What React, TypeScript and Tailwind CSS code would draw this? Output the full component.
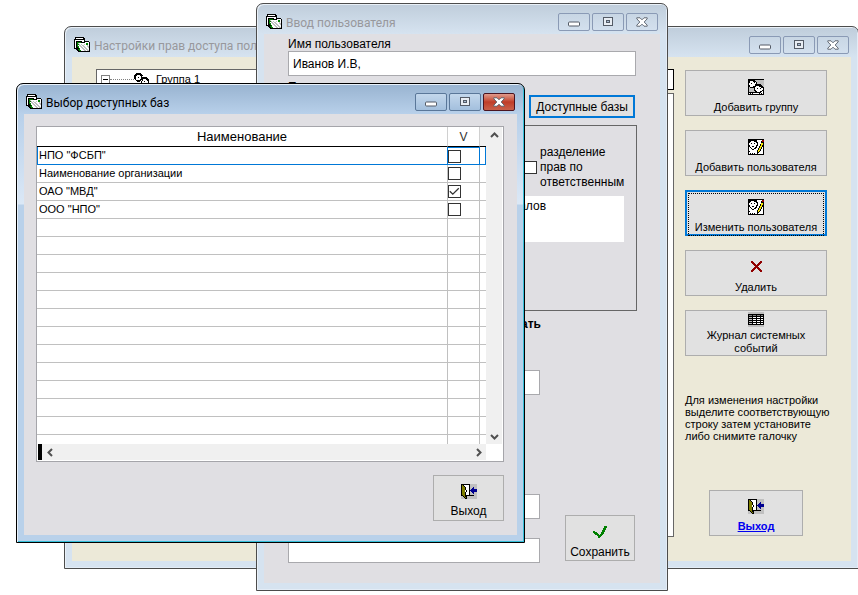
import { FC, ReactNode, useState } from 'react';

/* ---------- Pixel icons ---------- */

const PALETTE: Record<string, string> = {
  k: '#000000',
  w: '#ffffff',
  s: '#c0c0c0',
  d: '#808080',
  g: '#008000',
  o: '#808000',
  n: '#000090',
  y: '#f5e600',
  r: '#900000',
};

interface PixelIconProps {
  rows: string[];
}

// Draws one square per character, '.' stays transparent
const PixelIcon: FC<PixelIconProps> = ({ rows }) => (
  <svg
    width={rows[0].length}
    height={rows.length}
    viewBox={`0 0 ${rows[0].length} ${rows.length}`}
    shapeRendering="crispEdges"
    className="shrink-0"
    aria-hidden="true"
  >
    {rows.flatMap((row, y) =>
      row.split('').map((c, x) =>
        c === '.' ? null : <rect key={`${x}-${y}`} x={x} y={y} width="1" height="1" fill={PALETTE[c]} />
      )
    )}
  </svg>
);

const CARDS = [
  '.kkkkkkkkk......',
  '.kwwwwwwwkk.....',
  'kkkkkkkkkkk.....',
  'kwwwwwwwwwk.....',
  'kwkkkkkkwwkkkkk.',
  'kwkggggkkkkwwwwk',
  'kwkgswwwwwwwggwk',
  'kwkggswswwswggwk',
  'kwkgwsswsswwwswk',
  'kwkggwsswsswwssk',
  'kwkkgwwsswsswwsk',
  'kkkkkgwwsswsswwk',
  '..kkggwwwsswsswk',
  '...kkggwwwsswssk',
  '....kkkkkkkkkkkk',
];

const GROUP = [
  'kkkkkkkkkkkkkkkk',
  'kkkkkkksssssssss',
  'kkwwwkkkssssssss',
  'kkwwwwkwksssssss',
  'kwwkwwwwksssssss',
  'kwwwwwwkkkkkksss',
  'kkwwwwwkkkkkkkss',
  'kkwwwkkkwwwkkkks',
  'kskkkkkwwwwwwkkk',
  'kssssskwwkwwkwwk',
  'kssssskwwwwwwwwk',
  'kssssskkwwwwwwkk',
  'ksssssskkwwwkkwk',
  'kkkkkkkkkkkkkwwk',
  'kwkwkwwwwwwkwkwk',
  'kkkkkkkkkkkkkkkk',
];

const USER_EDIT = [
  'kkkkkkkkkkkkkkkk',
  'kkkkkkkkkwwwwwrr',
  'kkkwwwkkkwwwwkrr',
  'kkwwwwwwkkwwwkkk',
  'kwwkwwkwwkwwwyyk',
  'kwwwwwwwwkwwkyyk',
  'kkwwwwwwkkwwkykk',
  'kkwwkkwwkwwkyykk',
  'kwkwwwwkkwwkykwk',
  'kwwkwwkkwwkyykwk',
  'kwwwkkwwwwkykwwk',
  'kwwwwwwwwkyykwwk',
  'kkwwwwwwwkykwwwk',
  'kwwwwwwwwkkwwwwk',
  'kwkwkwkwwkwwwwwk',
  'kkkkkkkkkkkkkkkk',
];

const HEADS = [
  '..kkkkk.........',
  '.kkkkkkk........',
  'kkkwwwkkk.......',
  'kkwwwwwk........',
  'kkwwkwwkkkkkk...',
  'kkwwwwwkkkkkkk..',
  '.kwwwwkkkwwwkkk.',
  '..kkkkk.kwwwwkk.',
  '...kkk.kwwkwwwk.',
  '.......kwwwwwwk.',
  '........kwwwwk..',
  '........kkkkk...',
  '..........kk....',
];

const CROSS = [
  '................',
  '................',
  '...rr.......rr..',
  '...rrr.....rrr..',
  '....rrr...rrr...',
  '.....rrr.rrr....',
  '......rrrrr.....',
  '.......rrr......',
  '......rrrrr.....',
  '.....rrr.rrr....',
  '....rrr...rrr...',
  '...rrr.....rrr..',
  '...rr.......rr..',
  '................',
  '................',
  '................',
];

const JOURNAL = [
  'ssssssssssssssss',
  'ssssssssssssssss',
  'kkkkkkkkkkkkkkkk',
  'kdddkdddkdddkddk',
  'kkkkkkkkkkkkkkkk',
  'kssskwwwkwwwkwwk',
  'kkkkkkkkkkkkkkkk',
  'kssskwwwkwwwkwwk',
  'kkkkkkkkkkkkkkkk',
  'kssskwwwkwwwkwwk',
  'kkkkkkkkkkkkkkkk',
  'kssskwwwkwwwkwwk',
  'kkkkkkkkkkkkkkkk',
  'ssssssssssssssss',
  'ssssssssssssssss',
];

const DOOR = [
  'kkkkkkkkksssssss',
  'kokwwwwwksssssss',
  'kookwwwwksssssss',
  'koookwwwksssnsss',
  'koookwwwkssnnsss',
  'koookwwwksnnnnnn',
  'kooowkwwknnnnnnn',
  'kooowkwwksnnnnnn',
  'koookwwwkssnnsss',
  'koookwwwksssnsss',
  'koookwwwksssssss',
  'kkookkkkkkkkksss',
  'sskokkssssssssss',
  'ssskokssssssssss',
  'sssskkssssssssss',
];

const TICK = [
  '................',
  '................',
  '............ggg.',
  '............ggg.',
  '...........ggg..',
  '...........ggg..',
  '..........ggg...',
  '.gg.......ggg...',
  '.gggg....ggg....',
  '..gggg...ggg....',
  '...gggg.ggg.....',
  '.....ggggg......',
  '......ggg.......',
  '......gg........',
  '................',
  '................',
];

/* ---------- Window chrome ---------- */

const CaptionButtons: FC<{ active?: boolean }> = ({ active }) => {
  const base = 'flex h-[18px] w-8 items-center justify-center rounded-xs border';
  const tone = active
    ? 'border-[#5a7799] bg-linear-to-b from-[#c3d7ec] to-[#a3bfdd]'
    : 'border-[#8a9ab5] bg-linear-to-b from-[#c8d6e4] to-[#d3e0ee]';
  return (
    <div className="mt-[9px] flex gap-0.5">
      <button type="button" aria-label="Свернуть" className={`${base} ${tone}`}>
        <svg width="12" height="6" viewBox="0 0 12 6" className="mt-1">
          <rect x="0.5" y="1" width="11" height="4" rx="1" fill="#fff" stroke="#545b66" />
        </svg>
      </button>
      <button type="button" aria-label="Развернуть" className={`${base} ${tone}`}>
        <svg width="12" height="10" viewBox="0 0 12 10">
          <rect x="1.5" y="0.5" width="9" height="8" fill="#e8edf3" stroke="#545b66" />
          <rect x="4.5" y="3.5" width="3" height="2" fill="#a9bdd4" stroke="#545b66" />
        </svg>
      </button>
      <button
        type="button"
        aria-label="Закрыть"
        className={`${base} ${
          active ? 'border-[#4a1420] bg-linear-to-b from-[#e09a8c] via-[#c03d28] to-[#c8604a]' : tone
        }`}
      >
        <svg width="12" height="10" viewBox="0 0 12 10">
          <path
            d="M0.8 0.8h3.2l2 2 2-2h3.2v1L8.2 5l3 3.2v1H8l-2-2-2 2H0.8v-1L3.8 5l-3-3.2z"
            fill="#fff"
            stroke="#545b66"
            strokeWidth="0.9"
          />
        </svg>
      </button>
    </div>
  );
};

interface WindowProps {
  title: string;
  active?: boolean;
  className: string;
  clientClass: string;
  children: ReactNode;
}

const Window: FC<WindowProps> = ({ title, active, className, clientClass, children }) => (
  <section
    className={`absolute flex flex-col rounded-t-[7px] border px-[7px] pb-[7px] ${
      active
        ? 'border-black bg-[linear-gradient(#98b3d0_0px,#b8d0ea_30px,#dbe8f6_120px,#b9d1ea_121px)] shadow-[inset_1px_1px_0_#e8f1fa,inset_-1px_-1px_0_#34bfd9]'
        : 'border-[#4c4c4c] bg-[linear-gradient(#bfcddb_0px,#d6e3f0_30px)] shadow-[inset_1px_1px_0_#e9f0f7,inset_-1px_-1px_0_#e3ecf6]'
    } ${className}`}
  >
    <header className="flex h-[30px] shrink-0 items-start justify-between px-0.5">
      <div className="flex gap-1 pt-[10px]">
        <PixelIcon rows={CARDS} />
        <h1
          className={`font-['Roboto','Noto_Sans',sans-serif] text-[12px] leading-[18px] whitespace-nowrap ${
            active ? 'text-black' : 'text-[#98989c]'
          }`}
        >
          {title}
        </h1>
      </div>
      <CaptionButtons active={active} />
    </header>
    <div className={`flex-1 ${clientClass}`}>{children}</div>
  </section>
);

interface ToolButtonProps {
  icon: string[];
  focused?: boolean;
  compact?: boolean;
  className?: string;
  children: ReactNode;
}

const ToolButton: FC<ToolButtonProps> = ({ icon, focused, compact, className = '', children }) => (
  <button
    type="button"
    className={`flex h-[46px] flex-col items-center bg-[#e1e1e1] ${
      focused
        ? 'border-2 border-[#0078d7] p-px'
        : `border border-[#adadad] ${compact ? 'gap-0.5 pt-px leading-[13px]' : 'gap-1 pt-2 leading-4'}`
    } ${className}`}
  >
    {focused ? (
      <span className="flex w-full flex-1 flex-col items-center gap-1 border border-dotted border-black pt-[5px] leading-4">
        <PixelIcon rows={icon} />
        {children}
      </span>
    ) : (
      <>
        <PixelIcon rows={icon} />
        {children}
      </>
    )}
  </button>
);

/* ---------- Access rights window ---------- */

const SettingsWindow: FC = () => (
  <Window
    title="Настройки прав доступа поль"
    className="top-[26px] -right-px left-16"
    clientClass="flex gap-[11px] bg-[#ece9d8] pt-3 pr-6 pb-6 pl-6 text-[11px]"
  >
    <div className="flex h-[468px] flex-1">
      <div className="w-2/5 border border-[#666] bg-white pl-1">
        <div className="flex h-[18px] items-center">
          <span className="flex h-[9px] w-[9px] items-center justify-center border border-[#808080]">
            <span className="h-px w-[5px] bg-black" />
          </span>
          <span className="w-6 border-t border-dotted border-[#808080]" />
          <PixelIcon rows={HEADS} />
          <span className="pl-1.5">Группа 1</span>
        </div>
      </div>
      <div className="flex flex-1 flex-col gap-[3px]">
        <input aria-label="Поиск" className="h-[21px] w-full border border-black bg-white px-1" />
        <div className="flex-1 border border-[#666] bg-white" />
      </div>
    </div>
    <div className="flex w-[142px] flex-col pt-px">
      <div className="flex flex-col gap-[14px]">
        <ToolButton icon={GROUP}>Добавить группу</ToolButton>
        <ToolButton icon={USER_EDIT}>Добавить пользователя</ToolButton>
        <ToolButton icon={USER_EDIT} focused>
          Изменить пользователя
        </ToolButton>
        <ToolButton icon={CROSS}>Удалить</ToolButton>
        <ToolButton icon={JOURNAL} compact>
          <span>
            Журнал системных
            <br />
            событий
          </span>
        </ToolButton>
      </div>
      <p className="mt-[38px] leading-3 whitespace-nowrap">
        Для изменения настройки
        <br />
        выделите соответствующую
        <br />
        строку затем установите
        <br />
        либо снимите галочку
      </p>
      <ToolButton icon={DOOR} className="mx-6 mt-12">
        <span className="font-bold text-[#0000f0] underline">Выход</span>
      </ToolButton>
    </div>
  </Window>
);

/* ---------- User window ---------- */

const FIELD = 'h-[25px] border border-[#a9a9ad] bg-white px-1';

const UserWindow: FC = () => {
  const [name, setName] = useState('Иванов И.В,');
  return (
    <Window
      title="Ввод пользователя"
      className="top-[3px] left-64 w-[412px]"
      clientClass="flex flex-col bg-[#e0dfe3] pt-[3px] pr-6 pb-5 pl-6 text-[12px]"
    >
      <label htmlFor="user-name" className="leading-[14px]">
        Имя пользователя
      </label>
      <input id="user-name" className={FIELD} value={name} onChange={(e) => setName(e.target.value)} />
      <div className="mt-1 flex items-start justify-between">
        <label htmlFor="user-password" className="leading-[15px]">
          Пароль
        </label>
        <button
          type="button"
          className="mt-[15px] mr-px h-[23px] w-[106px] border-2 border-[#0078d7] bg-[#e1e1e1] pt-px leading-[18px] whitespace-nowrap"
        >
          Доступные базы
        </button>
      </div>
      <fieldset className="mt-[7px] -mr-px flex h-[186px] flex-col border border-[#666] pt-[19px] pr-3 pl-3">
        <div className="flex items-center justify-end gap-[3px]">
          <input
            id="split-rights"
            type="checkbox"
            className="h-[13px] w-[13px] appearance-none border border-[#333] bg-white"
          />
          <label htmlFor="split-rights" className="w-[84px] leading-[15px]">
            разделение
            <br />
            прав по
            <br />
            ответственным
          </label>
        </div>
        <div className="mt-1.5 h-[46px] bg-white pt-0.5 pr-[78px] text-right leading-4">журналов</div>
      </fieldset>
      <p className="mt-[6px] w-[253px] text-right leading-[15px] font-bold">Показывать</p>
      <div className="mt-[38px] flex items-end justify-between">
        <div className="flex w-[252px] flex-col">
          <input id="user-password" type="password" className={FIELD} />
          <input aria-label="Должность" className={`${FIELD} mt-[99px]`} />
          <input aria-label="Примечание" className={`${FIELD} mt-[19px]`} />
        </div>
        <ToolButton icon={TICK} className="mr-px mb-0.5 w-[70px]">
          Сохранить
        </ToolButton>
      </div>
    </Window>
  );
};

/* ---------- Available bases window ---------- */

const BASES = [
  { name: 'НПО "ФСБП"', checked: false },
  { name: 'Наименование организации', checked: false },
  { name: 'ОАО "МВД"', checked: true },
  { name: 'ООО "НПО"', checked: false },
];

const EMPTY_ROWS = 12;

interface ArrowProps {
  label: string;
  d: string;
}

const ScrollArrow: FC<ArrowProps> = ({ label, d }) => (
  <button type="button" aria-label={label} className="flex h-4 w-4 items-center justify-center">
    <svg width="9" height="9" viewBox="0 0 9 9" fill="none" stroke="#505050" strokeWidth="2">
      <path d={d} />
    </svg>
  </button>
);

const BasesWindow: FC = () => {
  const [bases, setBases] = useState(BASES);

  const toggle = (index: number) =>
    setBases((prev) => prev.map((b, i) => (i === index ? { ...b, checked: !b.checked } : b)));

  return (
    <Window
      title="Выбор доступных баз"
      active
      className="top-[83px] left-4 w-[509px]"
      clientClass="flex flex-col bg-[#e0dfe3] pt-3 pr-[13px] pb-[14px] pl-3 text-[12px]"
    >
      <div className="border border-[#a5a5aa] bg-white">
        <div className="flex pr-px">
          <div className="flex-1">
            <table className="w-full table-fixed border-separate border-spacing-0">
              <colgroup>
                <col />
                <col className="w-8" />
                <col className="w-[6px]" />
              </colgroup>
              <thead>
                <tr className="h-5">
                  <th className="border-r border-b border-r-[#d0d0d0] border-b-black p-0 text-[13px] leading-[18px] font-normal">
                    Наименование
                  </th>
                  <th className="border-r border-b border-r-[#d0d0d0] border-b-black p-0 leading-[18px] font-normal text-[#333]">
                    V
                  </th>
                  <th className="border-b border-b-black bg-[#f0f0f0] p-0" />
                </tr>
              </thead>
              <tbody>
                {bases.map((base, i) => {
                  const line = i === 0 ? 'border-[#0078d7]' : 'border-[#c0c0c0]';
                  return (
                    <tr key={base.name} className="h-[18px]">
                      <td
                        className={`border-r border-b p-0 align-top text-[11px] leading-4 ${line} ${
                          i === 0 ? 'border-l pl-px' : 'pl-0.5'
                        }`}
                      >
                        <label htmlFor={`base-${i}`} className="block">
                          {base.name}
                        </label>
                      </td>
                      <td className={`border-r border-b p-0 ${line} ${i === 0 ? 'border-t' : ''}`}>
                        <span className="grid h-[13px] w-[13px]">
                          <input
                            id={`base-${i}`}
                            type="checkbox"
                            checked={base.checked}
                            onChange={() => toggle(i)}
                            className="peer col-start-1 row-start-1 h-[13px] w-[13px] appearance-none border border-[#333] bg-white"
                          />
                          <svg
                            viewBox="0 0 13 13"
                            className="pointer-events-none invisible col-start-1 row-start-1 h-[13px] w-[13px] peer-checked:visible"
                            fill="none"
                            stroke="#333"
                            strokeWidth="1.3"
                          >
                            <path d="M1.8 6.2l3 3 6-6" />
                          </svg>
                        </span>
                      </td>
                      <td className={`border-b p-0 ${line} ${i === 0 ? 'border-r' : ''}`} />
                    </tr>
                  );
                })}
                {Array.from({ length: EMPTY_ROWS }, (_, i) => (
                  <tr key={i} className="h-[18px]">
                    <td className="border-r border-b border-[#c0c0c0] p-0" />
                    <td className="border-r border-b border-[#c0c0c0] p-0" />
                    <td className="border-b border-[#c0c0c0] p-0" />
                  </tr>
                ))}
                <tr className="h-[9px]">
                  <td className="border-r border-[#c0c0c0] p-0" />
                  <td className="border-r border-[#c0c0c0] p-0" />
                  <td className="p-0" />
                </tr>
              </tbody>
            </table>
          </div>
          <div className="flex w-4 flex-col justify-between bg-[#f0f0f0]">
            <ScrollArrow label="Вверх" d="M1 6l3.5-3.5L8 6" />
            <ScrollArrow label="Вниз" d="M1 3l3.5 3.5L8 3" />
          </div>
        </div>
        <div className="flex pr-[17px] pb-px pl-px">
          <span className="w-1 bg-black" />
          <div className="flex flex-1 justify-between bg-[#f0f0f0]">
            <ScrollArrow label="Влево" d="M6 1L2.5 4.5 6 8" />
            <ScrollArrow label="Вправо" d="M3 1l3.5 3.5L3 8" />
          </div>
        </div>
      </div>
      <ToolButton icon={DOOR} className="mt-[13px] w-[71px] self-end">
        Выход
      </ToolButton>
    </Window>
  );
};

export default function App() {
  return (
    <main className="relative min-h-screen overflow-hidden bg-white font-['Liberation_Sans',Arial,sans-serif] text-black">
      <SettingsWindow />
      <UserWindow />
      <BasesWindow />
    </main>
  );
}
